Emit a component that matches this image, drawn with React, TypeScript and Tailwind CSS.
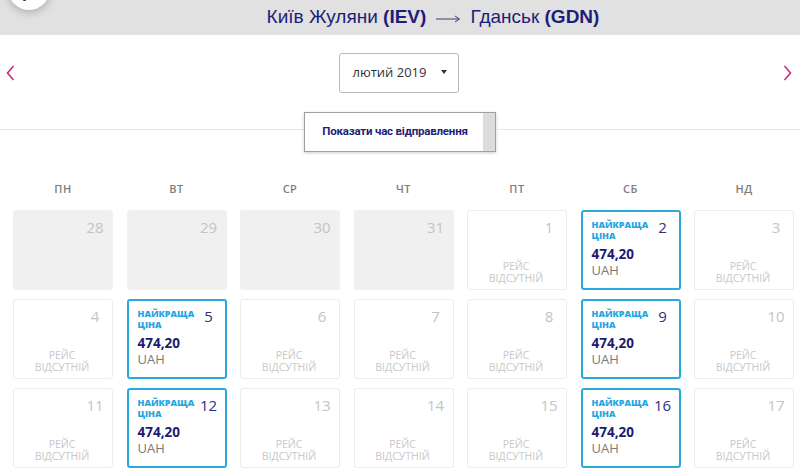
import React from "react";

type Cell =
  | { kind: "past"; day: number }
  | { kind: "none"; day: number }
  | { kind: "best"; day: number; price: string };

const weekDays = ["ПН", "ВТ", "СР", "ЧТ", "ПТ", "СБ", "НД"];

const cells: Cell[] = [
  { kind: "past", day: 28 },
  { kind: "past", day: 29 },
  { kind: "past", day: 30 },
  { kind: "past", day: 31 },
  { kind: "none", day: 1 },
  { kind: "best", day: 2, price: "474,20" },
  { kind: "none", day: 3 },
  { kind: "none", day: 4 },
  { kind: "best", day: 5, price: "474,20" },
  { kind: "none", day: 6 },
  { kind: "none", day: 7 },
  { kind: "none", day: 8 },
  { kind: "best", day: 9, price: "474,20" },
  { kind: "none", day: 10 },
  { kind: "none", day: 11 },
  { kind: "best", day: 12, price: "474,20" },
  { kind: "none", day: 13 },
  { kind: "none", day: 14 },
  { kind: "none", day: 15 },
  { kind: "best", day: 16, price: "474,20" },
  { kind: "none", day: 17 },
];

// the day number sits centred in a small box near the top right corner
const DayNum: React.FC<{ day: number; dark?: boolean }> = ({ day, dark }) => (
  <div className={`w-[22px] text-center text-[15px] leading-[20px] ${dark ? "text-[#2e2e80]" : "text-[#c4c4c4]"}`}>
    {day}
  </div>
);

const DayCell: React.FC<{ cell: Cell }> = ({ cell }) => {
  if (cell.kind === "past") {
    return (
      <div className="flex h-[80px] justify-end rounded-[3px] bg-[#f0f0f0] pt-[7px] pr-[7px]">
        <DayNum day={cell.day} />
      </div>
    );
  }
  if (cell.kind === "none") {
    return (
      <div className="flex h-[80px] flex-col rounded-[3px] border border-[#ececec] bg-white pt-[6px] pr-[6px] pb-[5px]">
        <div className="flex justify-end">
          <DayNum day={cell.day} />
        </div>
        <div className="mt-auto pl-[4px] text-center text-[10.5px] leading-[12px] uppercase text-[#c8c8c8]">
          <div>Рейс</div>
          <div>відсутній</div>
        </div>
      </div>
    );
  }
  return (
    <div className="flex h-[80px] flex-col rounded-[3px] border-2 border-[#2aa9dc] bg-white pt-[5px] pr-[5px] pl-[9px]">
      <div className="flex items-start justify-between">
        <div className="pt-[2px] text-[9px] font-extrabold leading-[11px] text-[#1fa6e0] uppercase">
          <div>Найкраща</div>
          <div>ціна</div>
        </div>
        <DayNum day={cell.day} dark />
      </div>
      <div className="mt-[6px] text-[13.5px] font-bold leading-[15px] text-[#1b1b70]">{cell.price}</div>
      <div className="text-[13px] leading-[16px] text-[#7a7a7a]">UAH</div>
    </div>
  );
};

const Chevron: React.FC<{ dir: "left" | "right" }> = ({ dir }) => (
  <svg width="9" height="16" viewBox="0 0 9 16" className="block">
    <path
      d={dir === "left" ? "M7.5 1 L1.5 8 L7.5 15" : "M1.5 1 L7.5 8 L1.5 15"}
      fill="none"
      stroke="#c42a8c"
      strokeWidth="1.6"
    />
  </svg>
);

export default function App() {
  return (
    <div className="relative h-[475px] w-[800px] overflow-hidden bg-white font-['Open_Sans',sans-serif]">
      {/* back button peeking from the top */}
      <div className="absolute top-[-32px] left-[8px] z-10 flex h-[42px] w-[42px] items-end justify-center rounded-full bg-white pb-[9px] shadow-[0_2px_8px_rgba(0,0,0,0.25)]">
        <div className="mr-[10px] h-[2px] w-[3px] rounded-full bg-[#2a2a7a]" />
      </div>

      <header className="flex h-[35px] items-center justify-center bg-[#e1e1e1] pl-[66px] font-['Liberation_Sans',Arial,sans-serif] text-[19px] text-[#1e1e78]">
        <span>
          Київ Жуляни <b>(IEV)</b>
        </span>
        <svg width="26" height="10" viewBox="0 0 26 10" className="mx-[9px] mt-[2px]">
          <path d="M1 5 H24 M20 2 L24.5 5 L20 8" fill="none" stroke="#3b3b80" strokeWidth="1" />
        </svg>
        <span>
          Гданськ <b>(GDN)</b>
        </span>
      </header>

      <div className="flex items-center justify-between pt-[18px] pr-[8px] pl-[6px]">
        <Chevron dir="left" />
        <div className="mr-[1px] flex h-[40px] w-[120px] items-center justify-between rounded-[3px] border border-[#b9b9b9] pr-[11px] pl-[13px] text-[13px] text-[#333]">
          <span>лютий 2019</span>
          <span className="mt-[-2px] h-0 w-0 border-x-[3px] border-t-[4px] border-x-transparent border-t-[#333]" />
        </div>
        <Chevron dir="right" />
      </div>

      <div className="mt-[19px] flex items-start">
        <div className="mt-[17px] h-px flex-1 bg-[#e8e8e8]" />
        <button className="flex h-[40px] w-[192px] items-stretch border border-[#a0a0a0] bg-white shadow-[0_1px_3px_rgba(0,0,0,0.2)]">
          <span className="flex flex-1 items-center justify-center pl-[2px] font-['Roboto',sans-serif] text-[11.5px] font-bold tracking-[-0.2px] text-[#1e1e78]">
            Показати час відправлення
          </span>
          <span className="w-[12px] bg-[#dcdcdc]" />
        </button>
        <div className="mt-[17px] h-px flex-1 bg-[#e8e8e8]" />
      </div>

      <div className="mt-[30px] ml-[13px] w-[781px]">
        <div className="grid grid-cols-7 gap-x-[13.5px]">
          {weekDays.map((d) => (
            <div key={d} className="text-center text-[11px] font-semibold leading-[14px] tracking-[0.5px] text-[#7d7d7d]">
              {d}
            </div>
          ))}
        </div>
        <div className="mt-[14px] grid grid-cols-7 gap-x-[13.5px] gap-y-[9px]">
          {cells.map((c) => (
            <DayCell key={c.day} cell={c} />
          ))}
        </div>
      </div>
    </div>
  );
}
